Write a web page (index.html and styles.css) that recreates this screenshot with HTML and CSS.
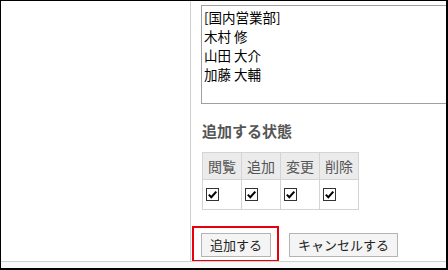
FILE: index.html
```html
<!DOCTYPE html>
<html lang="ja">
<head>
<meta charset="utf-8">
<link rel="stylesheet" href="styles.css">
</head>
<body>
<div class="frame">
  <div class="main">
    <div class="side"></div>
    <div class="content">
      <div class="listbox">
        <div class="item">[国内営業部]</div>
        <div class="item">木村 修</div>
        <div class="item">山田 大介</div>
        <div class="item">加藤 大輔</div>
      </div>
      <h3 class="heading">追加する状態</h3>
      <table class="perm">
        <thead>
          <tr><th>閲覧</th><th>追加</th><th>変更</th><th>削除</th></tr>
        </thead>
        <tbody>
          <tr>
            <td><svg class="cb" viewBox="0 0 13 13" width="13" height="13"><rect x="0.5" y="0.5" width="12" height="12" fill="#fff" stroke="#333"/><path d="M2.8 6.6 L5.3 9.2 L10.3 3.6" fill="none" stroke="#000" stroke-width="2"/></svg></td>
            <td><svg class="cb" viewBox="0 0 13 13" width="13" height="13"><rect x="0.5" y="0.5" width="12" height="12" fill="#fff" stroke="#333"/><path d="M2.8 6.6 L5.3 9.2 L10.3 3.6" fill="none" stroke="#000" stroke-width="2"/></svg></td>
            <td><svg class="cb" viewBox="0 0 13 13" width="13" height="13"><rect x="0.5" y="0.5" width="12" height="12" fill="#fff" stroke="#333"/><path d="M2.8 6.6 L5.3 9.2 L10.3 3.6" fill="none" stroke="#000" stroke-width="2"/></svg></td>
            <td><svg class="cb" viewBox="0 0 13 13" width="13" height="13"><rect x="0.5" y="0.5" width="12" height="12" fill="#fff" stroke="#333"/><path d="M2.8 6.6 L5.3 9.2 L10.3 3.6" fill="none" stroke="#000" stroke-width="2"/></svg></td>
          </tr>
        </tbody>
      </table>
      <div class="actions">
        <div class="highlight"><button class="btn btn-add">追加する</button></div>
        <button class="btn btn-cancel">キャンセルする</button>
      </div>
    </div>
  </div>
  <div class="footer"></div>
</div>
</body>
</html>
```

FILE: styles.css
```css
html, body {
  margin: 0;
  padding: 0;
  background: #fff;
}
.frame {
  width: 448px;
  height: 270px;
  box-sizing: border-box;
  border-top: 1px solid #000;
  border-left: 1px solid #000;
  border-right: 2px solid #000;
  border-bottom: 2px solid #000;
  display: flex;
  flex-direction: column;
  overflow: hidden;
  font-family: "Noto Sans CJK JP", "Liberation Sans", sans-serif;
  font-size: 13px;
  color: #222;
}
.main {
  height: 260px;
  display: flex;
  flex: none;
}
.side {
  width: 189px;
  flex: none;
  border-right: 1px solid #cfcfcf;
}
.content {
  flex: 1;
  min-width: 0;
  overflow: hidden;
  padding-left: 10px;
}
.listbox {
  margin-top: 4px;
  width: 270px;
  height: 99px;
  box-sizing: border-box;
  border: 1px solid #a0a0a0;
  padding: 2px 2px;
  color: #000;
  font-size: 13.5px;
}
.item {
  height: 19px;
  line-height: 19px;
  white-space: nowrap;
}
.heading {
  margin: 17px 0 0 1px;
  font-size: 15px;
  line-height: 20px;
  font-weight: bold;
  color: #555;
}
.perm {
  margin: 11px 0 0 1px;
  border-collapse: collapse;
  table-layout: fixed;
  width: 157px;
}
.perm th, .perm td {
  border: 1px solid #d4d4d4;
  padding: 0;
  box-sizing: border-box;
}
.perm th {
  height: 27px;
  background: #ebebeb;
  font-weight: normal;
  color: #555;
  font-size: 14px;
  text-align: center;
  line-height: 25px;
}
.perm td {
  height: 30px;
  padding-left: 3px;
  vertical-align: middle;
}
.cb {
  display: block;
}
.actions {
  margin: 16px 0 0 -9px;
  display: flex;
  align-items: flex-start;
  gap: 10px;
}
.highlight {
  border: 2px solid #e8000d;
  padding: 5px 6px 3px 7px;
}
.btn {
  font-family: inherit;
  font-size: 13px;
  color: #222;
  background: #f4f4f4;
  border: 1px solid #b4b4b4;
  border-radius: 0;
  height: 24px;
  padding: 0 8px;
  line-height: 22px;
  box-sizing: border-box;
}
.btn-add {
  width: 70px;
}
.btn-cancel {
  width: 109px;
  margin-top: 7px;
}
.footer {
  flex: 1;
  border-top: 1px solid #cfcfcf;
  background: #f8f8f8;
}
```
